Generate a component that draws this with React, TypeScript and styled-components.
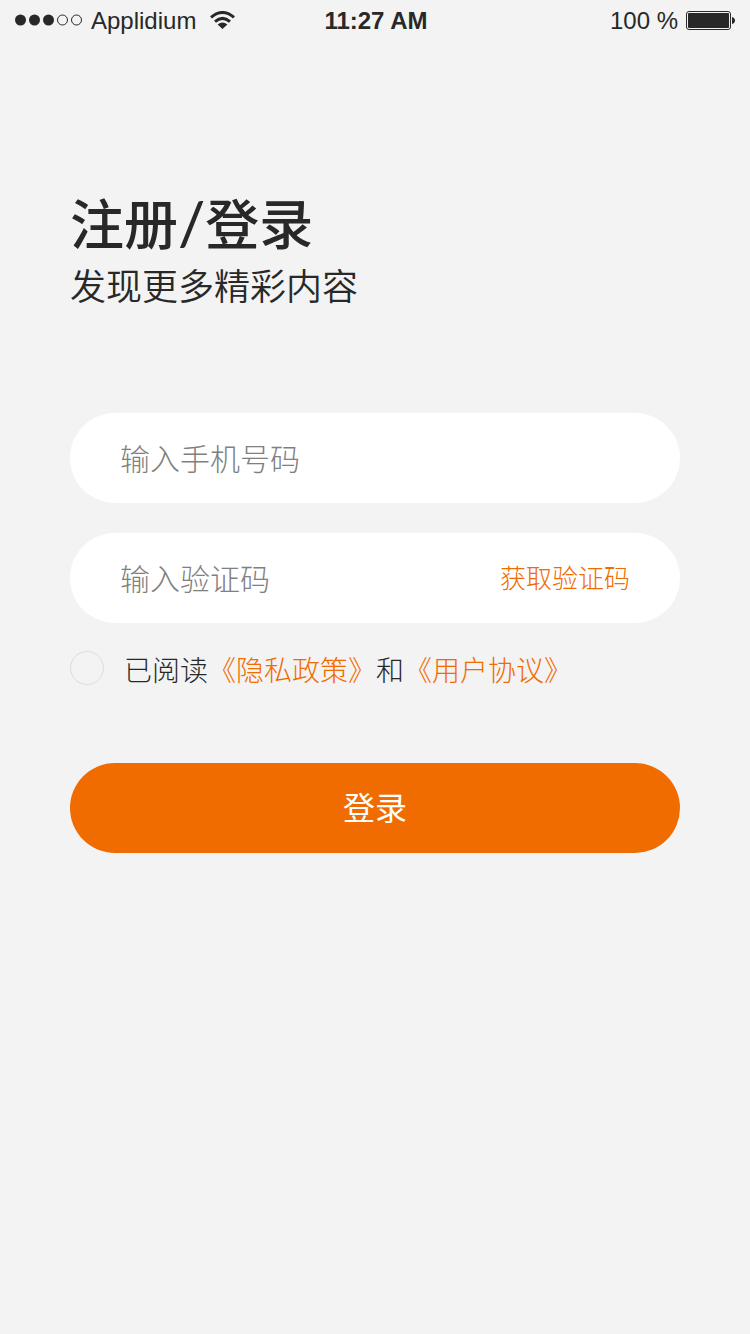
import React from "react";
import styled, { createGlobalStyle } from "styled-components";

const GlobalStyle = createGlobalStyle`
  * { box-sizing: border-box; }
  body {
    margin: 0;
    background: #f3f3f3;
    color: #282828;
    font-family: "Noto Sans CJK SC", sans-serif;
  }
  button, input { font-family: inherit; }
`;

const StatusBar = styled.header`
  display: grid;
  grid-template-columns: 1fr auto 1fr;
  align-items: center;
  height: 40px;
  padding: 0 15px;
  font: 24px/40px "Liberation Sans", sans-serif;
`;

const StatusGroup = styled.div<{ $end?: boolean }>`
  display: flex;
  align-items: center;
  justify-content: ${(p) => (p.$end ? "flex-end" : "flex-start")};
  gap: 8px;
  svg { flex: none; }
`;

const StatusText = styled.span`
  padding-top: 2px;
  line-height: 38px;
`;

const Wifi = styled.svg`
  margin-left: 6px;
`;

const Clock = styled.time`
  padding: 2px 0 0 2px;
  font-weight: 700;
  line-height: 38px;
`;

const Main = styled.main`
  padding: 146px 70px 0;
`;

const Title = styled.h1`
  margin: 0;
  font-size: 54px;
  font-weight: 500;
  line-height: 72px;
`;

const Slash = styled.span`
  font-family: Lato, sans-serif;
  font-size: 60px;
  font-weight: 500;
  line-height: 0;
`;

const Subtitle = styled.p`
  margin: 0;
  font-size: 36px;
  font-weight: 350;
  line-height: 52px;
`;

const Form = styled.form`
  display: flex;
  flex-direction: column;
  gap: 30px;
  margin-top: 103px;
`;

const Field = styled.div`
  display: flex;
  align-items: center;
  height: 90px;
  padding: 0 50px;
  border-radius: 45px;
  background: #fff;
`;

const Input = styled.input`
  flex: 1;
  min-width: 0;
  height: 90px;
  padding: 0 0 3px;
  border: 0;
  outline: 0;
  background: transparent;
  color: #282828;
  font-size: 30px;
  font-weight: 300;
  &::placeholder { color: #808080; opacity: 1; }
`;

const CodeButton = styled.button`
  padding: 0 0 2px;
  border: 0;
  background: none;
  color: #f06c00;
  font-size: 26px;
  font-weight: 300;
  line-height: 40px;
`;

const Agreement = styled.div`
  display: flex;
  align-items: center;
  gap: 20px;
  height: 40px;
  margin-top: -5px;
  font-size: 28px;
  font-weight: 300;
  line-height: 40px;
`;

const AgreementText = styled.label`
  padding-top: 2px;
`;

const Check = styled.input`
  appearance: none;
  flex: none;
  width: 34px;
  height: 34px;
  margin: 0;
  border: 1px solid #dcdcdc;
  border-radius: 50%;
  &:checked { background: #f06c00; }
`;

const Link = styled.a`
  color: #f06c00;
  text-decoration: none;
`;

const Submit = styled.button`
  height: 90px;
  margin-top: 45px;
  padding: 0 0 4px;
  border: 0;
  border-radius: 45px;
  background: #f06c00;
  color: #fff;
  font-size: 32px;
  font-weight: 400;
`;

export default function App() {
  return (
    <>
      <GlobalStyle />
      <StatusBar>
        <StatusGroup>
          <svg width="68" height="12" viewBox="0 0 68 12" fill="#282828">
            <circle cx="5.5" cy="6" r="5.5" />
            <circle cx="19.5" cy="6" r="5.5" />
            <circle cx="33.5" cy="6" r="5.5" />
            <circle cx="47.5" cy="6" r="5" fill="none" stroke="#282828" />
            <circle cx="61.5" cy="6" r="5" fill="none" stroke="#282828" />
          </svg>
          <StatusText>Applidium</StatusText>
          <Wifi width="25" height="18" viewBox="0 0 25 18" fill="none" stroke="#282828" strokeWidth="3">
            <path d="M1 6.4Q12.5 -3.4 24 6.4" />
            <path d="M5 10.6Q12.5 4.2 20 10.6" />
            <path d="M7.6 13.6Q12.5 9.6 17.4 13.6L12.5 18Z" fill="#282828" stroke="none" />
          </Wifi>
        </StatusGroup>
        <Clock>11:27 AM</Clock>
        <StatusGroup $end>
          <StatusText>100 %</StatusText>
          <svg width="49" height="19" viewBox="0 0 49 19">
            <rect x=".5" y=".5" width="44" height="18" rx="2.5" fill="none" stroke="#282828" />
            <rect x="2" y="2" width="41" height="15" rx="1" fill="#282828" />
            <path d="M46 6Q49 7 49 9.5T46 13Z" fill="#282828" />
          </svg>
        </StatusGroup>
      </StatusBar>
      <Main>
        <Title>注册<Slash>/</Slash>登录</Title>
        <Subtitle>发现更多精彩内容</Subtitle>
        <Form onSubmit={(e) => e.preventDefault()}>
          <Field>
            <Input type="tel" aria-label="手机号码" placeholder="输入手机号码" />
          </Field>
          <Field>
            <Input type="text" inputMode="numeric" aria-label="验证码" placeholder="输入验证码" />
            <CodeButton type="button">获取验证码</CodeButton>
          </Field>
          <Agreement>
            <Check type="checkbox" id="agree" />
            <AgreementText htmlFor="agree">
              已阅读<Link href="#privacy">《隐私政策》</Link>和<Link href="#terms">《用户协议》</Link>
            </AgreementText>
          </Agreement>
          <Submit type="submit">登录</Submit>
        </Form>
      </Main>
    </>
  );
}
